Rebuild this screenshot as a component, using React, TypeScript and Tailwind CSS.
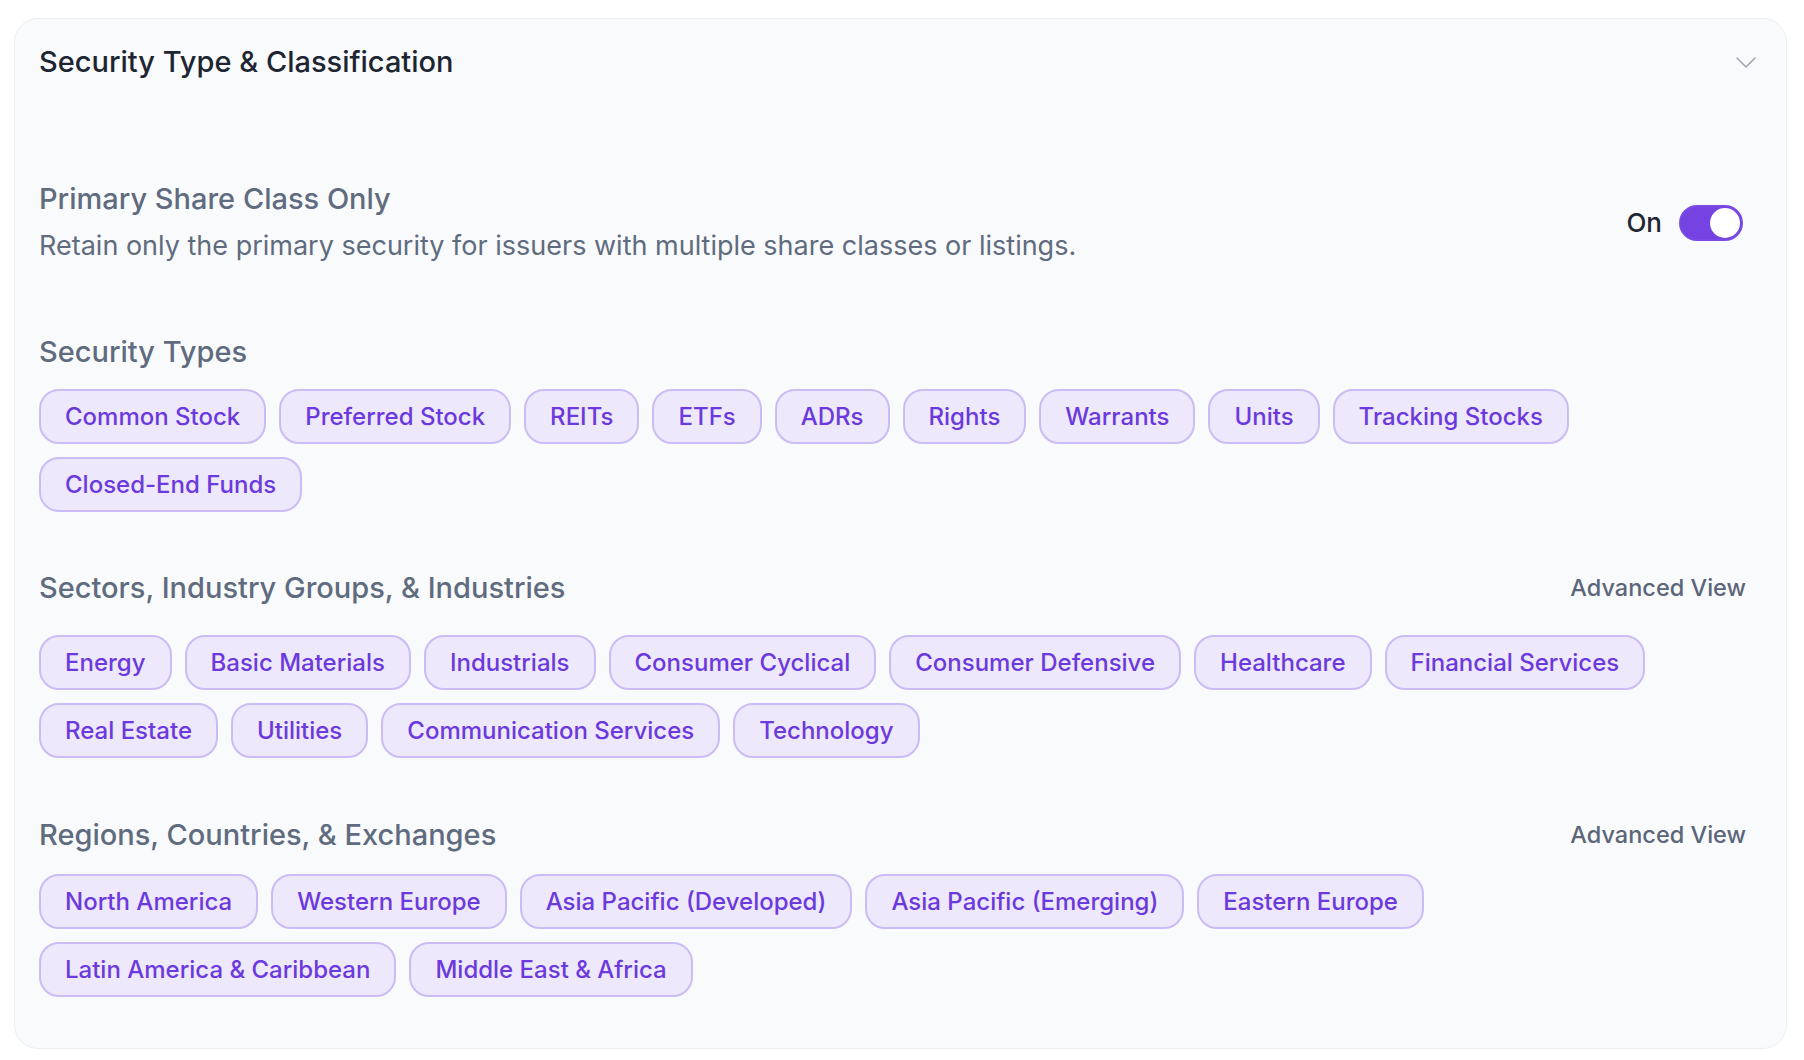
import React from 'react';

const securityTypes = [
  'Common Stock',
  'Preferred Stock',
  'REITs',
  'ETFs',
  'ADRs',
  'Rights',
  'Warrants',
  'Units',
  'Tracking Stocks',
  'Closed-End Funds',
];

const sectors = [
  'Energy',
  'Basic Materials',
  'Industrials',
  'Consumer Cyclical',
  'Consumer Defensive',
  'Healthcare',
  'Financial Services',
  'Real Estate',
  'Utilities',
  'Communication Services',
  'Technology',
];

const regions = [
  'North America',
  'Western Europe',
  'Asia Pacific (Developed)',
  'Asia Pacific (Emerging)',
  'Eastern Europe',
  'Latin America & Caribbean',
  'Middle East & Africa',
];

const Chip: React.FC<{ label: string }> = ({ label }) => (
  <button className="h-[55px] px-[24px] rounded-[20px] border-2 border-[#cbbcf6] bg-[#ede8fb] text-[24px] font-medium text-[#6b39dd] leading-none">
    {label}
  </button>
);

const ChipGroup: React.FC<{ items: string[] }> = ({ items }) => (
  <div className="flex flex-wrap gap-x-[13px] gap-y-[13px]">
    {items.map((item) => (
      <Chip key={item} label={item} />
    ))}
  </div>
);

const SectionLabel: React.FC<{ title: string; advanced?: boolean }> = ({ title, advanced }) => (
  <div className="flex items-center justify-between">
    <h3 className="text-[29px] leading-[36px] font-medium text-[#5f6b7e]">{title}</h3>
    {advanced && (
      <button className="text-[23.5px] font-medium text-[#5b6679] leading-[36px]">Advanced View</button>
    )}
  </div>
);

const Toggle: React.FC<{ on: boolean }> = ({ on }) => (
  <div className="flex items-center gap-[17px]">
    <span className="text-[26px] font-medium text-[#1f2531]">{on ? 'On' : 'Off'}</span>
    <div className="w-[64px] h-[36px] rounded-full bg-[#7443e2] border-2 border-[#7a4ae6] p-[1px] flex justify-end">
      <div className="w-[30px] h-[30px] rounded-full bg-white" />
    </div>
  </div>
);

export default function App() {
  return (
    <div
      className="min-h-screen bg-white pl-[14px] pr-[17px] pt-[18px] pb-[13px]"
      style={{ fontFamily: 'Inter, "Noto Sans", sans-serif' }}
    >
      <div className="rounded-[24px] border border-[#eceef1] bg-[#f9fafc] pl-[24px] pb-[51px]">
        {/* header */}
        <div className="flex items-center justify-between pt-[25px] pr-[30px]">
          <h2 className="text-[29px] leading-[36px] font-medium text-[#1e2532]">
            Security Type &amp; Classification
          </h2>
          <svg width="20" height="11" viewBox="0 0 20 11" fill="none">
            <path d="M1 1l9 9 9-9" stroke="#a0a6b1" strokeWidth="1.6" strokeLinecap="round" strokeLinejoin="round" />
          </svg>
        </div>

        <div className="pr-[40px]">
          {/* primary share class */}
          <div className="mt-[101px] flex items-center justify-between">
            <div>
              <h3 className="text-[29px] leading-[36px] font-medium text-[#5f6b7e]">Primary Share Class Only</h3>
              <p className="mt-[11px] text-[27px] leading-[36px] text-[#5f6b7e]">
                Retain only the primary security for issuers with multiple share classes or listings.
              </p>
            </div>
            <div className="mr-[3px]">
              <Toggle on />
            </div>
          </div>

          {/* security types */}
          <div className="mt-[70px]">
            <SectionLabel title="Security Types" />
            <div className="mt-[19px]">
              <ChipGroup items={securityTypes} />
            </div>
          </div>

          {/* sectors */}
          <div className="mt-[58px]">
            <SectionLabel title="Sectors, Industry Groups, & Industries" advanced />
            <div className="mt-[29px]">
              <ChipGroup items={sectors} />
            </div>
          </div>

          {/* regions */}
          <div className="mt-[59px]">
            <SectionLabel title="Regions, Countries, & Exchanges" advanced />
            <div className="mt-[21px]">
              <ChipGroup items={regions} />
            </div>
          </div>
        </div>
      </div>
    </div>
  );
}
